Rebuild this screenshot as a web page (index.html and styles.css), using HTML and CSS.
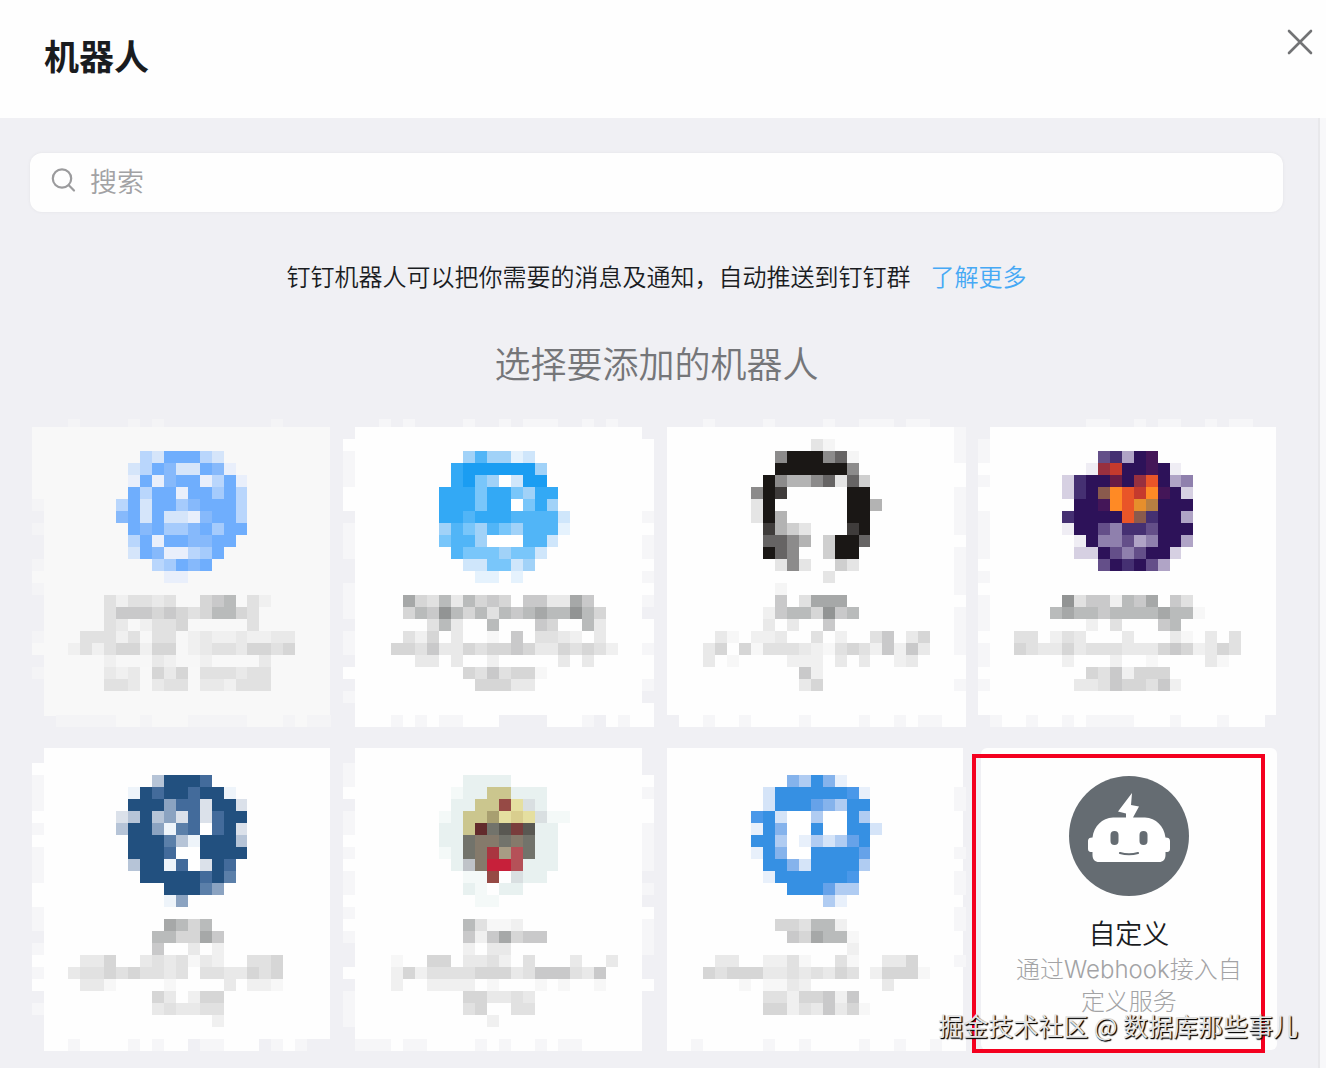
FILE: index.html
```html
<!DOCTYPE html>
<html lang="zh-CN">
<head>
<meta charset="utf-8">
<meta name="viewport" content="width=device-width, initial-scale=1">
<title>机器人</title>
<link rel="stylesheet" href="styles.css">
</head>
<body>
<header class="header">
  <h1 class="title">机器人</h1>
  <button class="close" type="button" aria-label="关闭">
    <svg viewBox="0 0 26 26" width="26" height="26" fill="none" stroke="#727375" stroke-width="2.6" stroke-linecap="round"><path d="M2 2 24 24M24 2 2 24"/></svg>
  </button>
</header>
<div class="body">
  <main class="content">
    <label class="search">
      <svg class="search-icon" viewBox="0 0 26 26" width="26" height="26" fill="none" stroke="#9b9b9d" stroke-width="2.2" stroke-linecap="round"><circle cx="12" cy="11.500" r="9.200"/><path d="M18.800 18.300 24 23.500"/></svg>
      <input class="search-input" type="search" placeholder="搜索" aria-label="搜索">
    </label>
    <p class="info">钉钉机器人可以把你需要的消息及通知，自动推送到钉钉群<a class="more" href="#more">了解更多</a></p>
    <h2 class="subtitle">选择要添加的机器人</h2>
    <ul class="grid">
      <li data-tile="0"></li>
      <li data-tile="1"></li>
      <li data-tile="2"></li>
      <li data-tile="3"></li>
      <li data-tile="4"></li>
      <li data-tile="5"></li>
      <li data-tile="6"></li>
      <li class="custom-cell">
        <button class="custom" type="button">
          <svg class="avatar" viewBox="0 0 120 120" width="120" height="120">
            <circle cx="60" cy="60" r="60" fill="#656c72"/>
            <path fill="#fff" d="M63 17 49 35.500 57 37.500 57 41.500H44C33 42 25 50 23.500 61.500 20.500 61.500 19 62.500 19 65V73C19 75.500 20.500 76 23.500 76V79C23.500 83.500 26 86 30 86H90C94 86 96.500 83.500 96.500 79V76C99.500 76 101 75.500 101 73V65C101 62.500 99.500 61.500 96.500 61.500 95 50 87 42 76 41.500H64L70 30.500 62 29Z"/>
            <rect x="41.500" y="55" width="8" height="14" rx="4" fill="#656c72"/>
            <rect x="70.500" y="55" width="8" height="14" rx="4" fill="#656c72"/>
            <path d="M51 77Q60 79.500 69 77" fill="none" stroke="#656c72" stroke-width="2.200" stroke-linecap="round"/>
          </svg>
          <span class="name">自定义</span>
          <span class="desc">通过Webhook接入自定义服务</span>
        </button>
        <span class="marker"></span>
        <span class="watermark">掘金技术社区 @ 数据库那些事儿</span>
      </li>
    </ul>
  </main>
</div>
<script src="mosaic.js"></script>
</body>
</html>
```
FILE: styles.css
```css
* { box-sizing: border-box; }

body {
  margin: 0;
  min-height: 100vh;
  display: flex;
  flex-direction: column;
  background: #fefefe;
  color: #1a1c1f;
  font-family: "Noto Sans CJK SC", "Noto Sans", sans-serif;
  font-weight: 350;
}

button {
  border: 0;
  padding: 0;
  background: none;
  color: inherit;
  font: inherit;
  cursor: pointer;
}

svg { display: block; }

.header {
  height: 118px;
  padding: 29px 13px 0 44px;
  display: flex;
  justify-content: space-between;
  align-items: flex-start;
}

.title {
  margin: 0;
  font-size: 35px;
  line-height: 52px;
  font-weight: 700;
}

.body {
  flex: 1;
  display: flex;
  padding-right: 6px;
  background: #f8f8fa;
}

.content {
  flex: 1;
  padding: 35px 35px 0 30px;
  border-right: 2px solid #e8e8eb;
  background: #f0f0f4;
}

.search {
  height: 59px;
  padding: 0 20px 5px;
  display: flex;
  align-items: center;
  gap: 14px;
  border-radius: 12px;
  background: #fefefe;
  box-shadow: 0 0 3px #e2e2e6;
}

.search-input {
  flex: 1;
  min-width: 0;
  height: 52px;
  padding: 0;
  border: 0;
  outline: 0;
  background: none;
  font: inherit;
  font-size: 27px;
}

.search-input::placeholder { color: #a2a2a4; }

.info {
  margin: 46px 0 0;
  font-size: 24px;
  line-height: 36px;
  text-align: center;
}

.more {
  margin-left: 20px;
  color: #46a9f5;
  text-decoration: none;
}

.subtitle {
  margin: 42px 0 27px;
  color: #757679;
  font-size: 36px;
  line-height: 52px;
  font-weight: 350;
  text-align: center;
}

.grid {
  margin: 0 6px 0 2px;
  padding: 0;
  display: grid;
  grid-template-columns: repeat(4, 1fr);
  list-style: none;
}

.mosaic {
  width: 100%;
  height: 324px;
}

.custom-cell {
  position: relative;
  padding: 9px 0 0 15px;
}

.custom {
  width: 100%;
  height: 302px;
  padding: 28px 30px 0;
  display: flex;
  flex-direction: column;
  align-items: center;
  border-radius: 6px;
  background: #fefefe;
}

.name {
  margin-top: 17px;
  font-size: 27px;
  line-height: 40px;
}

.desc {
  margin: 1px -6px 0;
  color: #a3a3a5;
  font-family: Inter, "Noto Sans CJK SC", sans-serif;
  font-size: 24px;
  font-weight: 300;
  line-height: 32px;
}

.marker {
  position: absolute;
  top: 15px;
  left: 6px;
  right: 12px;
  height: 299px;
  border: 4px solid #f4001f;
}

.watermark {
  position: absolute;
  top: 267px;
  right: -21px;
  color: #e4e4e4;
  font-size: 25px;
  line-height: 38px;
  font-weight: 400;
  white-space: nowrap;
  text-shadow: 1px 1px 1px #000, 1px 1px 1px #333;
}
```
FILE: mosaic.js
```js
// Each tile is a 26 x 27 grid of cells: an icon block and a block of grey cells for the text.
const CELL = 12;
const greys = { 1: "#f7f7f7", 2: "#f0f0f0", 3: "#e9e9e9", 4: "#e1e1e1", 5: "#d6d6d6", 6: "#c9c9ca", 7: "#b9bbbb", 8: "#a6a8a8", 9: "#929494" };

const tiles = [
  {
    base: "#f8f8f8", soft: "#f4f4f6", x: 12, w: 287, y: 12, h: 289,
    top: "...v....v.w.........v....", left: ".wwwwwwv.v..vwv...vw.v...",
    bottom: "..vvvvvwwvwwwvvvvvwwwvwvv", right: "",
    colors: { b: "#6faefd", c: "#86b9fb", d: "#a5cbfc", e: "#b9d6fc", f: "#d5e5fa", g: "#e9effb" },
    icon: [7, 3, ["..efbbbef", ".febcffbcg", ".gbgcbbgebg", ".bebbgbbdbe", "ebfbbdcbbbe", "cbfbffgcbbe", ".bcbddcbdbb", ".ebgbbccbb", ".fbcggedb", "...edbcb", "....gg"]],
    text: [3, 15, ["...424434..567.42", "...4666565457754", "...43.2445.....4", ".444241441232232233", "2424552551234435545", "...211132112....3", "...323.535.444344", "...443.344.332444"]]
  },
  {
    base: "#fefefe", soft: "#f6f6f8", x: 12, w: 288, y: 12, h: 288,
    top: "...v.v....w..w.vvv..w.w...", left: "..wvvvww.vvv..vvv.vv.w.v..",
    bottom: ".wwwvwvwvvwww....wwwv.wvww", right: "..wwwwwwvwvvwvwv.wwvwwv.ww",
    colors: { a: "#1a9df2", b: "#33a9f5", c: "#51b5f7", d: "#79c6fa", e: "#a1d2f8", f: "#cfe6fb", g: "#e5f2fd", w: "#ffffff" },
    icon: [8, 3, ["..eceegf", ".baaaaaae", ".badewfaa", "bbbdbbdebb", "bbbdbbwdbe", "bbcbbbccccf", "ecdecdecccg", "dccewwwccf", ".cdddeddf", "..ffddfe", "...gg.g"]],
    text: [4, 15, [".854737565.663386", ".57697574767877975", "...473..7...65..73", ".425.3..1.6.4432.3", "5546335455653354542", "..33.3..2.....3.3", "......5464551", ".......55533"]]
  },
  {
    base: "#fefefe", soft: "#f6f6f8", x: 12, w: 288, y: 12, h: 288,
    top: "....v....w....v..vvv.ww...", left: "",
    bottom: "..wwvwwvwwwwvwwwwvwwvwvvww", right: ".vvvwwvvvvwvvvvwvvvvwwvwww",
    colors: { k: "#1a1715", l: "#3f3c3b", m: "#666464", n: "#8c8b8b", o: "#b3b3b3", p: "#cfcfcf", q: "#e5e5e5", r: "#f5f5f5" },
    icon: [8, 2, [".....qr", "..nkkknmr", "..kkkkkkn", ".knoonmqmp", "nkl.....kk", "qk......kko", "qko.....kk", ".lopq...lk", ".mmno.pkkm", ".kmn..pkk", "..qnq..pq", "......q", "..r"]],
    text: [4, 15, ["......6.4888", ".....26775967", ".....3.3..6", ".31.223..4.2..46.35", "35.5144432145426263", "3.1....222.3.3..23", "........62", "........35"]]
  },
  {
    base: "#fefefe", soft: "#f6f6f8", x: 24, w: 287, y: 12, h: 288,
    top: "..........vv..v.vv..w.vv..", left: "", inner: "..vvwvwwvvvvwvwvvvwvvwvww.",
    bottom: "..vwwvwwvwvvvvwwwvwwwvwww.", right: "",
    colors: { k: "#2d1259", l: "#453072", m: "#644f89", n: "#8f80ad", o: "#b0a4c6", p: "#d6d0e2", q: "#efedf4", r: "#c53a2d", s: "#98303f", t: "#ff8a25", u: "#e95528", v: "#8a5a4d", w: "#691c44", x: "#e68f2c", y: "#441658", z: "#b77f42" },
    icon: [8, 3, ["...mloky", "..qsrkkykq", "plkkwksukon", "plkvturtykp", ".kkytuxzkkk", "lkkkkuvlkko", "qkkmnllmkkk", ".qknnmonkko", ".ppkmnmkkp", "...mklkmo"]],
    text: [4, 15, ["....94662768.64", "...7877677778771", "......2.4...67", "44.243...3...31.3.4", "5433534443335652354", "....2...2..1....31", "......5462555", ".....334655462"]]
  },
  {
    base: "#fefefe", soft: "#f6f6f8", x: 12, w: 287, y: 9, h: 291,
    top: "", left: "..wvvvwvwvvvwwvv.vwvw.v...",
    bottom: ".wwvwwwwvwvww.vvwww.vwv...", right: "",
    colors: { k: "#22507f", l: "#436b9b", m: "#5b7fa9", n: "#8ba3c1", o: "#b6c4d7", p: "#dbe1ea", q: "#eef4fa", w: "#ffffff" },
    icon: [7, 3, ["...okkkl", ".qklkklkkq", ".kkknllpkkp", "pokonplplkk", "okknqmlwlkp", ".kkkmoqkkko", ".kkklwwkkkk", ".okkqlwpkl", "..kkkkklkm", "....kkkmn", "....qn"]],
    text: [3, 15, ["........8757", ".......775586", ".......6..3.2", ".335..3434132..445", "3445454434.4433545", ".331....1....3.221", ".......53.255", ".......343344", "............2"]]
  },
  {
    base: "#fefefe", soft: "#f6f6f8", x: 12, w: 288, y: 9, h: 291,
    top: "", left: "..vvw.vvwvwvvwvwv..w.vvv..",
    bottom: ".vvvwvvwwwwvwvwwvwvvwwwww.", right: "...wvwwvvvv.v.wvvv..w....",
    colors: { a: "#e8f1f0", b: "#f4f9f8", c: "#cbc68e", d: "#d9ce8e", e: "#a89f70", f: "#964a45", g: "#e5dfa0", h: "#72736b", i: "#595852", j: "#857a6b", k: "#622b2c", l: "#793d3c", m: "#a93540", n: "#c7203a", o: "#b55158", p: "#bfc3c8", q: "#a79c84", r: "#d9dfe1" },
    icon: [8, 3, ["..aaaa", ".baaccaaa", ".aaccfgra", "baccegdgrbb", "aackhiliaa", "aahjjhjhaa", "bahjmqohaa", ".apjnnoaaa", "..bbf.raa", "..ab.aa", "...bb"]],
    text: [4, 15, ["......74112", "......6268566", "......2.33", "1..55.3342.4...3..3", "252444455534666436", "2..2222.1...1.1..1", "......553343", "......45..44", "........2"]]
  },
  {
    base: "#fefefe", soft: "#f6f6f8", x: 12, w: 297, y: 9, h: 291,
    top: "", left: "",
    bottom: ".wwvwwwwwvwwvwwwwvwwvwwvww", right: "....vv...v.vv.vv..v...",
    colors: { k: "#3690e3", l: "#4a98e9", m: "#66a2e9", n: "#85b3ec", o: "#b0ccf2", p: "#d5e4f8", q: "#e8f0fb", w: "#ffffff" },
    icon: [8, 3, ["...noknq", ".pkkkkkklq", ".pkkkmnokk", "lkpwwowwko", "qknwwkwwkkp", "kkowqopomk", "qknwwkkkkm", ".kknpkkkko", ".qkkkkkkl", "...kkkmoo", "......oq"]],
    text: [4, 15, ["......554772", ".......658771", "............2", ".33..2241..41..335", "5455533434354.25551", "...1.1132......3", ".....44255626", ".....552436351"]]
  }
];

function rect(x, y, w, h, fill) {
  return `<rect x="${x}" y="${y}" width="${w}" height="${h}" fill="${fill}"/>`;
}

function block([col, row, lines], colors) {
  return lines.map((line, r) => [...line].map((c, i) =>
    colors[c] ? rect((col + i) * CELL, (row + r) * CELL, CELL, CELL, colors[c]) : ""
  ).join("")).join("");
}

function draw(tile) {
  const fringe = { w: tile.base, v: tile.soft };
  return `<svg class="mosaic" viewBox="0 0 312 324" preserveAspectRatio="none" shape-rendering="crispEdges" aria-hidden="true">`
    + rect(tile.x, tile.y, tile.w, tile.h, tile.base)
    + [...tile.top].map((c, i) => fringe[c] ? rect(i * CELL, 4, CELL, 8, tile.soft) : "").join("")
    + block([0, 25, [tile.bottom]], fringe)
    + block([0, 0, [...tile.left]], fringe)
    + block([1, 0, [...(tile.inner || "")]], fringe)
    + block([25, 0, [...tile.right]], fringe)
    + block(tile.icon, tile.colors)
    + block(tile.text, greys)
    + `</svg>`;
}

document.querySelectorAll("[data-tile]").forEach(cell => {
  cell.innerHTML = draw(tiles[cell.dataset.tile]);
});
```
